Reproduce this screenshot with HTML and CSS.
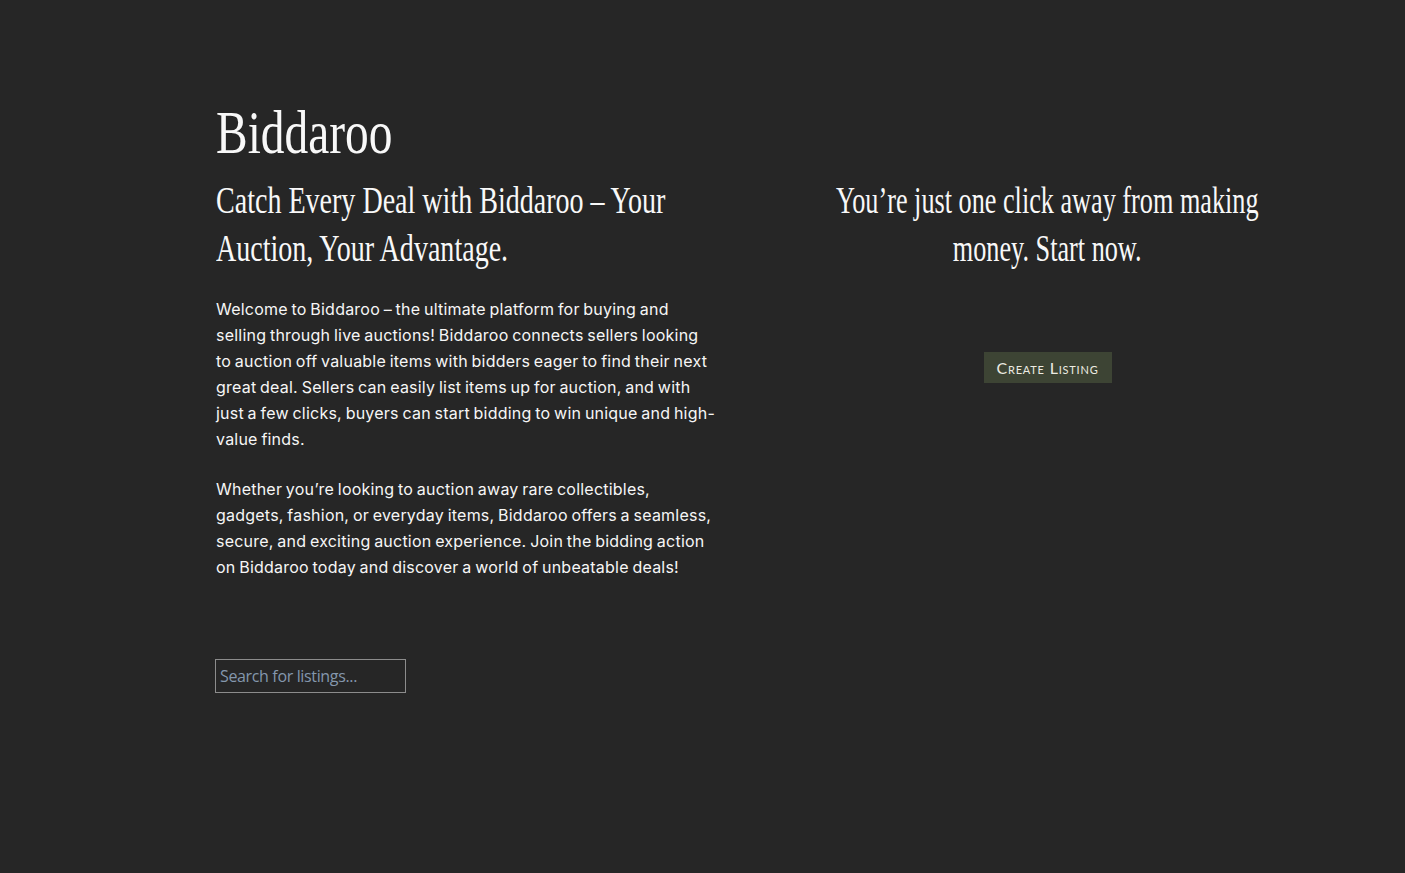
FILE: index.html
```html
<!DOCTYPE html>
<html lang="en">
<head>
<meta charset="utf-8">
<title>Biddaroo</title>
<link rel="stylesheet" href="styles.css">
</head>
<body>
<main class="page">
  <h1 class="brand"><span class="cond">Biddaroo</span></h1>
  <div class="columns">
    <section class="intro">
      <h2 class="tagline"><span class="cond">Catch Every Deal with Biddaroo – Your<br>Auction, Your Advantage.</span></h2>
      <p class="copy">Welcome to Biddaroo – the ultimate platform for buying and selling through live auctions! Biddaroo connects sellers looking to auction off valuable items with bidders eager to find their next great deal. Sellers can easily list items up for auction, and with just a few clicks, buyers can start bidding to win unique and high-value finds.</p>
      <p class="copy">Whether you’re looking to auction away rare collectibles, gadgets, fashion, or everyday items, Biddaroo offers a seamless, secure, and exciting auction experience. Join the bidding action on Biddaroo today and discover a world of unbeatable deals!</p>
      <input class="search" type="text" placeholder="Search for listings...">
    </section>
    <section class="cta">
      <h2 class="cta-title"><span class="cond">You’re just one click away from making<br>money. Start now.</span></h2>
      <button class="create-btn" type="button">Create Listing</button>
    </section>
  </div>
</main>
</body>
</html>
```

FILE: styles.css
```css
* { box-sizing: border-box; }

html, body {
  margin: 0;
  padding: 0;
  background: #262626;
  color: #f6f6f6;
  height: 100%;
}

.page {
  padding: 97px 0 0 216px;
}

.cond {
  display: inline-block;
  flex: none;
  white-space: nowrap;
  transform-origin: left top;
}

.brand {
  margin: 0;
  font-family: "Liberation Serif", "Times New Roman", serif;
  font-weight: 400;
  font-size: 62px;
  line-height: 70px;
  color: #f8f8f8;
}

.brand .cond {
  transform: scaleX(0.765);
}

.columns {
  display: grid;
  grid-template-columns: 500px 535px;
  column-gap: 64px;
  margin-top: 9px;
  align-items: start;
}

.tagline,
.cta-title {
  margin: 0;
  font-family: "Liberation Serif", "Times New Roman", serif;
  font-weight: 400;
  font-size: 38px;
  line-height: 48px;
  color: #f8f8f8;
}

.tagline .cond {
  transform: scaleX(0.738);
}

.cta {
  display: flex;
  flex-direction: column;
  align-items: center;
}

.cta-title {
  display: flex;
  justify-content: center;
  text-align: center;
  width: 100%;
}

.cta-title .cond {
  transform: scaleX(0.69);
  transform-origin: center top;
}

.copy {
  margin: 24px 0 0;
  font-family: "Inter", "Noto Sans", sans-serif;
  font-size: 16px;
  line-height: 26px;
  letter-spacing: 0.22px;
  word-spacing: -1px;
  color: #f6f6f6;
}

.search {
  display: block;
  margin-top: 79px;
  margin-left: -1px;
  width: 191px;
  height: 34px;
  padding: 0 4px;
  background: transparent;
  border: 1px solid #8c8c8c;
  border-radius: 0;
  font-family: "Open Sans", "Noto Sans", sans-serif;
  font-size: 16px;
  letter-spacing: -0.35px;
  color: #dfe6ee;
  outline: none;
}

.search::placeholder {
  color: #8497ad;
}

.create-btn {
  margin-top: 80px;
  width: 128px;
  height: 31px;
  padding: 0;
  background: #3d4434;
  border: none;
  color: #ecebe2;
  font-family: "Lato", "Noto Sans", sans-serif;
  font-variant: small-caps;
  font-size: 16px;
  letter-spacing: 0.8px;
  cursor: pointer;
}
```
